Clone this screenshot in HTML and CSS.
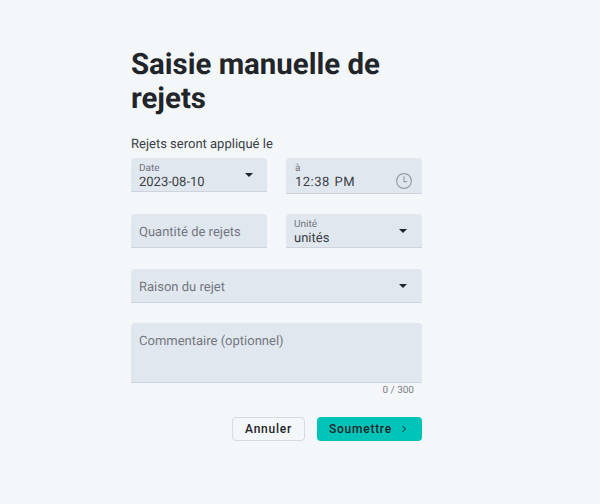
FILE: index.html
```html
<!DOCTYPE html>
<html lang="fr">

<head>
    <meta charset="UTF-8">
    <meta name="viewport" content="width=device-width, initial-scale=1.0">
    <title>Saisie manuelle de rejets</title>
    <link rel="stylesheet" href="styles.css">
</head>

<body>
    <main class="form">
        <h1 class="title">Saisie manuelle de rejets</h1>
        <p class="intro">Rejets seront appliqué le</p>

        <div class="row row-first">
            <div class="field">
                <span class="label">Date</span>
                <span class="value">2023-08-10</span>
                <span class="caret caret-date"></span>
            </div>
            <div class="field field-time">
                <span class="label">à</span>
                <span class="value value-time">12:38 PM</span>
                <svg class="clock" width="18" height="18" viewBox="0 0 18 18" fill="none" stroke="#9a9ea6" stroke-width="1.2">
                    <circle cx="9" cy="9" r="7.4"></circle>
                    <path d="M9 4.6V9.6H12.2"></path>
                </svg>
            </div>
        </div>

        <div class="row">
            <div class="field field-empty">
                <span class="placeholder">Quantité de rejets</span>
            </div>
            <div class="field">
                <span class="label">Unité</span>
                <span class="value">unités</span>
                <span class="caret"></span>
            </div>
        </div>

        <div class="field field-empty field-wide">
            <span class="placeholder">Raison du rejet</span>
            <span class="caret"></span>
        </div>

        <div class="field field-area">
            <span class="placeholder">Commentaire (optionnel)</span>
        </div>
        <div class="counter">0 / 300</div>

        <div class="actions">
            <button class="btn btn-cancel">Annuler</button>
            <button class="btn btn-submit">
                Soumettre
                <svg width="8" height="10" viewBox="0 0 8 10" fill="none" stroke="#1f2328" stroke-width="1">
                    <path d="M2.5 2L5.5 5L2.5 8"></path>
                </svg>
            </button>
        </div>
    </main>
</body>

</html>
```

FILE: styles.css
```css
/* Page */
body {
    margin: 0;
    height: 504px;
    background-color: #f4f7fa;
    font-family: Roboto, "Liberation Sans", sans-serif;
    color: #2f333a;
    text-rendering: geometricPrecision;
    overflow: hidden;
}

.form {
    width: 291px;
    margin-left: 131px;
    padding-top: 48px;
}

/* Header */
.title {
    margin: 0;
    font-size: 29.4px;
    line-height: 34px;
    font-weight: 700;
    color: #212429;
}

.intro {
    margin: 19px 0 0;
    font-size: 13px;
    line-height: 20px;
    color: #3a3e45;
}

/* Rows */
.row {
    display: flex;
    justify-content: space-between;
    margin-bottom: 21px;
}

.row-first {
    margin-top: 3px;
    margin-bottom: 20px;
}

/* Fields */
.field {
    position: relative;
    display: flex;
    flex-direction: column;
    box-sizing: border-box;
    width: 136px;
    height: 34px;
    padding: 5px 8px 0;
    background-color: #e1e7ef;
    border-bottom: 1px solid #ced3dc;
    border-radius: 4px 4px 0 0;
}

.field-time {
    height: 36px;
    padding-left: 9px;
}

.field-empty {
    justify-content: center;
    padding-top: 4px;
}

.field-wide {
    width: 100%;
    margin-bottom: 20px;
}

.field-area {
    width: 100%;
    height: 60px;
    padding-top: 10px;
}

.label {
    font-size: 10px;
    line-height: 11px;
    color: #6f747c;
}

.value {
    font-size: 13px;
    line-height: 17px;
    color: #3a3e45;
}

.value-time {
    letter-spacing: 0.5px;
    word-spacing: 1px;
}

.placeholder {
    font-size: 13px;
    line-height: 18px;
    color: #73777f;
}

/* Icons over the fields */
.caret {
    position: absolute;
    right: 15px;
    top: 15px;
    border-left: 4px solid transparent;
    border-right: 4px solid transparent;
    border-top: 4px solid #212429;
}

.caret-date {
    right: 14px;
}

.clock {
    position: absolute;
    right: 9px;
    top: 14px;
}

/* Counter */
.counter {
    margin-top: 1px;
    padding-right: 8px;
    text-align: right;
    font-size: 10px;
    line-height: 13px;
    color: #7c8087;
}

/* Buttons */
.actions {
    display: flex;
    justify-content: flex-end;
    gap: 12px;
    margin-top: 20px;
}

.btn {
    box-sizing: border-box;
    height: 24px;
    padding: 0;
    font-family: Roboto, "Liberation Sans", sans-serif;
    font-size: 12px;
    font-weight: 500;
    letter-spacing: 0.75px;
    color: #212429;
    border-radius: 4px;
    cursor: pointer;
}

.btn-cancel {
    width: 73px;
    background-color: #f4f7fa;
    border: 1px solid #d5dae3;
}

.btn-submit {
    display: flex;
    align-items: center;
    gap: 8px;
    width: 105px;
    padding-left: 12px;
    background-color: #00c4b8;
    border: none;
}
```
